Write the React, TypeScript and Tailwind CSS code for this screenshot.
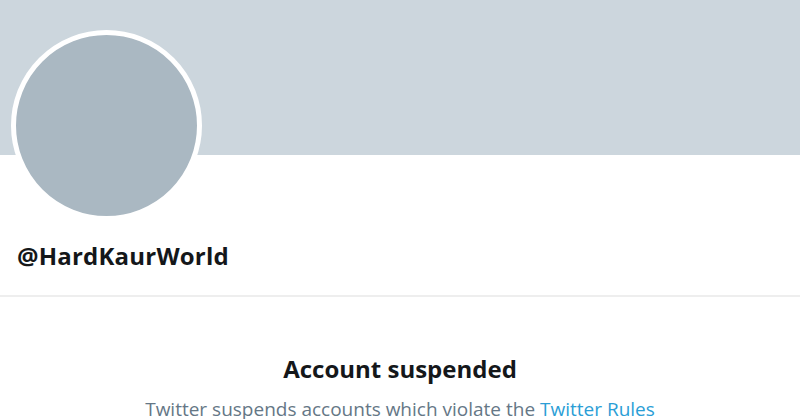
export default function App() {
  return (
    <div className="w-[800px] h-[419px] overflow-hidden bg-white" style={{ fontFamily: '"Open Sans", "Noto Sans", sans-serif' }}>
      <div className="h-[155px] bg-[#ccd6dd]" />
      <div className="relative h-[142px] border-b-2 border-[#eeeeee]">
        <div className="absolute left-[11px] top-[-125px] w-[191px] h-[191px] rounded-full bg-[#aab8c2] border-[5px] border-white" />
        <div className="pt-[85px] pl-[17px] text-[24px] font-bold leading-[32px] text-[#14171a] tracking-[0.2px]">@HardKaurWorld</div>
      </div>
      <div className="flex flex-col items-center pt-[55px]">
        <div className="text-[24px] font-bold leading-[34px] text-[#14171a]">Account suspended</div>
        <div className="mt-[10px] text-[19px] leading-[26px] text-[#657786]">
          Twitter suspends accounts which violate the <span className="text-[#2b9ed6]">Twitter Rules</span>
        </div>
      </div>
    </div>
  );
}
